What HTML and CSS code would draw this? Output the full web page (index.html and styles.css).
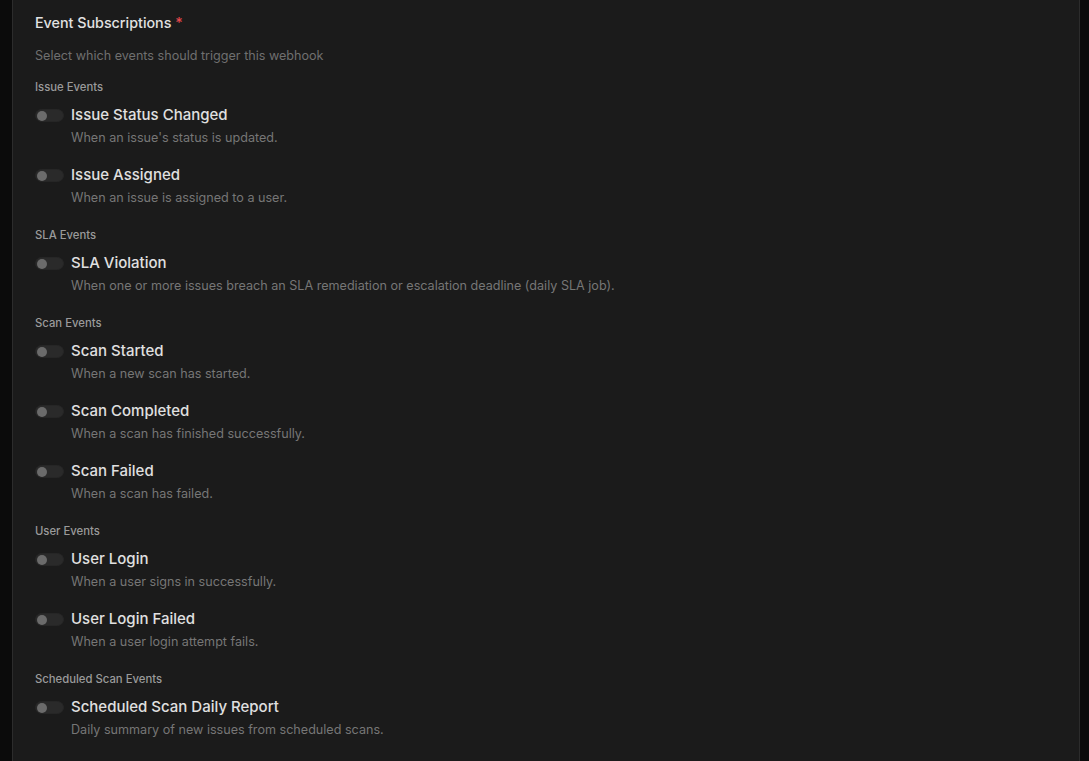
FILE: index.html
```html
<!DOCTYPE html>
<html lang="en">
<head>
    <meta charset="UTF-8">
    <meta name="viewport" content="width=device-width, initial-scale=1.0">
    <title>Webhook Events</title>
    <link rel="stylesheet" href="styles.css">
</head>
<body>

    <!-- Webhook form card -->
    <div class="card">
        <div class="field-title">Event Subscriptions <span class="required">*</span></div>
        <p class="field-hint">Select which events should trigger this webhook</p>

        <div class="group">
            <div class="group-label">Issue Events</div>
            <label class="event">
                <span class="toggle"><span class="knob"></span></span>
                <span class="event-text">
                    <span class="event-name">Issue Status Changed</span>
                    <span class="event-desc">When an issue's status is updated.</span>
                </span>
            </label>
            <label class="event">
                <span class="toggle"><span class="knob"></span></span>
                <span class="event-text">
                    <span class="event-name">Issue Assigned</span>
                    <span class="event-desc">When an issue is assigned to a user.</span>
                </span>
            </label>
        </div>

        <div class="group">
            <div class="group-label">SLA Events</div>
            <label class="event">
                <span class="toggle"><span class="knob"></span></span>
                <span class="event-text">
                    <span class="event-name">SLA Violation</span>
                    <span class="event-desc">When one or more issues breach an SLA remediation or escalation deadline (daily SLA job).</span>
                </span>
            </label>
        </div>

        <div class="group">
            <div class="group-label">Scan Events</div>
            <label class="event">
                <span class="toggle"><span class="knob"></span></span>
                <span class="event-text">
                    <span class="event-name">Scan Started</span>
                    <span class="event-desc">When a new scan has started.</span>
                </span>
            </label>
            <label class="event">
                <span class="toggle"><span class="knob"></span></span>
                <span class="event-text">
                    <span class="event-name">Scan Completed</span>
                    <span class="event-desc">When a scan has finished successfully.</span>
                </span>
            </label>
            <label class="event">
                <span class="toggle"><span class="knob"></span></span>
                <span class="event-text">
                    <span class="event-name">Scan Failed</span>
                    <span class="event-desc">When a scan has failed.</span>
                </span>
            </label>
        </div>

        <div class="group">
            <div class="group-label">User Events</div>
            <label class="event">
                <span class="toggle"><span class="knob"></span></span>
                <span class="event-text">
                    <span class="event-name">User Login</span>
                    <span class="event-desc">When a user signs in successfully.</span>
                </span>
            </label>
            <label class="event">
                <span class="toggle"><span class="knob"></span></span>
                <span class="event-text">
                    <span class="event-name">User Login Failed</span>
                    <span class="event-desc">When a user login attempt fails.</span>
                </span>
            </label>
        </div>

        <div class="group">
            <div class="group-label">Scheduled Scan Events</div>
            <label class="event">
                <span class="toggle"><span class="knob"></span></span>
                <span class="event-text">
                    <span class="event-name">Scheduled Scan Daily Report</span>
                    <span class="event-desc">Daily summary of new issues from scheduled scans.</span>
                </span>
            </label>
        </div>
    </div>

</body>
</html>
```

FILE: styles.css
```css
/* General Styles */
* {
    margin: 0;
    padding: 0;
    box-sizing: border-box;
    font-family: 'Inter', 'Noto Sans', sans-serif;
}

body {
    background: #0b0b0b;
    color: #e6e6e6;
    padding: 0 9px 0 12px;
    height: 100vh;
    overflow: hidden;
}

/* Card */
.card {
    background: #1b1b1b;
    border-left: 1px solid #2c2c2c;
    border-right: 1px solid #2c2c2c;
    padding: 13px 22px 40px 22px;
    min-height: 100%;
}

.field-title {
    font-size: 14.3px;
    font-weight: 500;
    line-height: 20px;
    color: #e2e2e2;
}

.required {
    color: #e5484d;
}

.field-hint {
    font-size: 12.6px;
    line-height: 20px;
    color: #6f6f6f;
    margin-top: 13px;
}

/* Event groups */
.group {
    margin-top: 19px;
}

.field-hint + .group {
    margin-top: 13px;
}

.group-label {
    font-size: 11.3px;
    font-weight: 500;
    line-height: 16px;
    color: #9a9a9a;
    margin-bottom: 10px;
}

.event {
    display: flex;
    align-items: flex-start;
    gap: 7px;
    cursor: pointer;
}

.event + .event {
    margin-top: 17px;
}

/* Switch */
.toggle {
    width: 29px;
    height: 13px;
    margin-top: 4px;
    border-radius: 7px;
    background: #2a2a2a;
    border: 1px solid #262626;
    display: flex;
    align-items: center;
    padding: 0 1px;
    flex-shrink: 0;
}

.knob {
    width: 10px;
    height: 10px;
    border-radius: 50%;
    background: #6b6b6b;
}

.event-text {
    display: flex;
    flex-direction: column;
    gap: 3px;
}

.event-name {
    font-size: 15px;
    font-weight: 500;
    line-height: 20px;
    color: #e0e0e0;
}

.event-desc {
    font-size: 12.6px;
    line-height: 20px;
    color: #767676;
}
```
